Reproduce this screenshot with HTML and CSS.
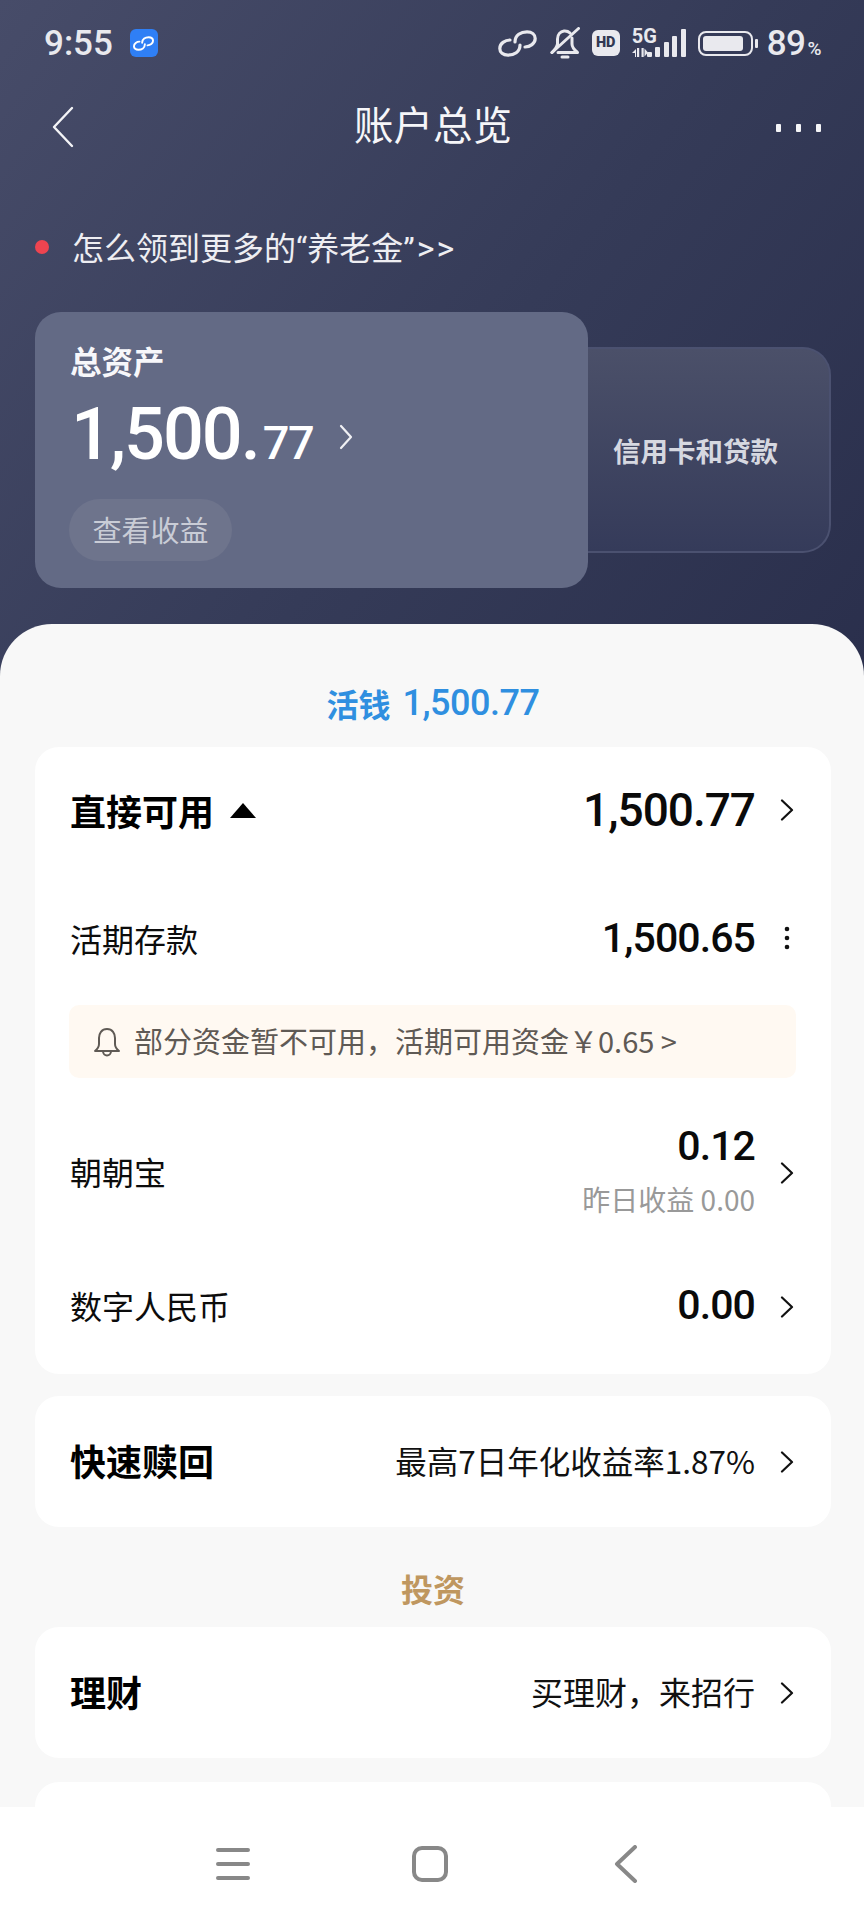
FILE: index.html
```html
<!DOCTYPE html>
<html lang="zh-CN">
<head>
<meta charset="utf-8">
<title>账户总览</title>
<link rel="stylesheet" href="styles.css">
</head>
<body>
<div class="page">
  <header class="hero">
    <div class="status">
      <div class="status-left">
        <span class="time">9:55</span>
        <span class="app-icon">
          <svg width="21" height="15" viewBox="0 0 39 27" fill="none" stroke="#fff" stroke-width="3.600" stroke-linecap="round"><path d="M17 12C17 5 23 1.800 29 1.800C34 1.800 37.200 4.500 37.200 8.500C37.200 13.500 32 17 27 17"/><path d="M22 15C22 22 16 25.200 10 25.200C5 25.200 1.800 22.500 1.800 18.500C1.800 13.500 7 10 12 10"/></svg>
        </span>
      </div>
      <div class="status-right">
        <svg class="ic-link" width="39" height="27" viewBox="0 0 39 27" fill="none" stroke="#e9e9ee" stroke-width="3.200" stroke-linecap="round"><path d="M17 12C17 5 23 1.800 29 1.800C34 1.800 37.200 4.500 37.200 8.500C37.200 13.500 32 17 27 17"/><path d="M22 15C22 22 16 25.200 10 25.200C5 25.200 1.800 22.500 1.800 18.500C1.800 13.500 7 10 12 10"/></svg>
        <svg class="ic-bell" width="30" height="32" viewBox="0 0 30 32" fill="none" stroke="#e9e9ee" stroke-width="3" stroke-linecap="round" stroke-linejoin="round"><path d="M7.500 17V12C7.500 7.500 10.500 4.500 14 4C16.500 3.800 18.500 4.500 20 6"/><path d="M22 11V17C22 20.500 24.500 23 27.500 25.500H8"/><path d="M7.500 17C7 20.500 4.500 23 2 25.500"/><path d="M28.500 1.500L2 25.500"/><path d="M12 30H18"/></svg>
        <span class="hd">HD</span>
        <div class="net">
          <div class="net-labels">
            <span class="g5">5G</span>
            <svg width="18" height="9" viewBox="0 0 18 9" fill="#e9e9ee"><path d="M0 5L4 1V9H3V5Z"/><rect x="5" y="0" width="2.200" height="9"/><rect x="9.500" y="0" width="2.200" height="9"/><path d="M16 4.500L12.500 8.500V.5Z"/></svg>
          </div>
          <div class="bars"><i class="b1"></i><i class="b2"></i><i class="b3"></i><i class="b4"></i><i class="b5"></i></div>
        </div>
        <div class="battery"><div class="battery-body"><div class="battery-fill"></div></div><div class="battery-nub"></div></div>
        <span class="pct">89<small>%</small></span>
      </div>
    </div>

    <nav class="titlebar">
      <div class="bar-side">
        <svg class="back" width="22" height="42" viewBox="0 0 22 42" fill="none" stroke="#f4f4f7" stroke-width="2.400" stroke-linecap="round" stroke-linejoin="round"><path d="M20 2L2 21L20 40"/></svg>
      </div>
      <h1 class="title">账户总览</h1>
      <div class="bar-side end"><div class="more"><i></i><i></i><i></i></div></div>
    </nav>

    <div class="notice"><span class="red-dot"></span><span>怎么领到更多的<span class="latin">“</span>养老金<span class="latin">”</span><span class="latin arrows">&gt;&gt;</span></span></div>

    <div class="assets">
      <section class="asset-card">
        <div class="asset-label">总资产</div>
        <div class="asset-value">
          <span class="big">1,500.</span><span class="small">77</span>
          <svg class="asset-chev" width="14" height="26" viewBox="0 0 14 26" fill="none" stroke="#f0f0f4" stroke-width="2.200" stroke-linecap="round" stroke-linejoin="round"><path d="M2 2L12 13L2 24"/></svg>
        </div>
        <span class="pill">查看收益</span>
      </section>
      <section class="side-card">信用卡和贷款</section>
    </div>
  </header>

  <main class="sheet">
    <div class="section-title blue"><span>活钱</span><span class="num">1,500.77</span></div>

    <section class="card">
      <div class="row row-head">
        <div class="head-label"><span class="strong">直接可用</span><svg width="26" height="15" viewBox="0 0 26 15"><path d="M13 0L26 15H0Z" fill="#000"/></svg></div>
        <div class="right"><span class="amount">1,500.77</span>
          <svg class="chev" width="14" height="22" viewBox="0 0 14 22" fill="none" stroke="#111" stroke-width="2.200" stroke-linecap="round" stroke-linejoin="round"><path d="M2 1.500L12 11L2 20.500"/></svg></div>
      </div>
      <div class="row row-deposit">
        <span class="label">活期存款</span>
        <div class="right"><span class="amount sm">1,500.65</span>
          <svg class="chev" width="14" height="24" viewBox="0 0 14 24" fill="#111"><circle cx="7" cy="3" r="2.300"/><circle cx="7" cy="12" r="2.300"/><circle cx="7" cy="21" r="2.300"/></svg></div>
      </div>
      <div class="alert">
        <svg width="28" height="30" viewBox="0 0 28 30" fill="none" stroke="#5f5a55" stroke-width="2" stroke-linecap="round" stroke-linejoin="round"><path d="M14 2C8.500 2 6 6.500 6 11V17C6 20 4.500 22 2 24H26C23.500 22 22 20 22 17V11C22 6.500 19.500 2 14 2Z"/><path d="M10 24C10 27 12 28.500 14 28.500C16 28.500 18 27 18 24"/></svg>
        <span class="alert-text">部分资金暂不可用，活期可用资金￥0.65 &gt;</span>
      </div>
      <div class="row row-zhao">
        <span class="label">朝朝宝</span>
        <div class="right">
          <div class="stack"><span class="amount sm">0.12</span><span class="sub">昨日收益 0.00</span></div>
          <svg class="chev" width="14" height="22" viewBox="0 0 14 22" fill="none" stroke="#111" stroke-width="2.200" stroke-linecap="round" stroke-linejoin="round"><path d="M2 1.500L12 11L2 20.500"/></svg>
        </div>
      </div>
      <div class="row row-digital">
        <span class="label">数字人民币</span>
        <div class="right"><span class="amount sm">0.00</span>
          <svg class="chev" width="14" height="22" viewBox="0 0 14 22" fill="none" stroke="#111" stroke-width="2.200" stroke-linecap="round" stroke-linejoin="round"><path d="M2 1.500L12 11L2 20.500"/></svg></div>
      </div>
    </section>

    <section class="card single gap">
      <span class="strong">快速赎回</span>
      <div class="right"><span class="desc small-desc">最高7日年化收益率1.87%</span>
        <svg class="chev" width="14" height="22" viewBox="0 0 14 22" fill="none" stroke="#111" stroke-width="2.200" stroke-linecap="round" stroke-linejoin="round"><path d="M2 1.500L12 11L2 20.500"/></svg></div>
    </section>

    <div class="section-title gold">投资</div>

    <section class="card single">
      <span class="strong">理财</span>
      <div class="right"><span class="desc">买理财，来招行</span>
        <svg class="chev" width="14" height="22" viewBox="0 0 14 22" fill="none" stroke="#111" stroke-width="2.200" stroke-linecap="round" stroke-linejoin="round"><path d="M2 1.500L12 11L2 20.500"/></svg></div>
    </section>

    <section class="card single next"></section>
  </main>

  <footer class="nav">
    <svg width="36" height="34" viewBox="0 0 36 34" fill="none" stroke="#888" stroke-width="4" stroke-linecap="round"><path d="M3 3H33M3 17H33M3 31H33"/></svg>
    <svg width="36" height="36" viewBox="0 0 36 36" fill="none" stroke="#888" stroke-width="4"><rect x="2" y="2" width="32" height="32" rx="8"/></svg>
    <svg class="nav-back" width="24" height="38" viewBox="0 0 24 38" fill="none" stroke="#888" stroke-width="4" stroke-linecap="round" stroke-linejoin="round"><path d="M21 2L3 19L21 36"/></svg>
  </footer>
</div>
</body>
</html>
```

FILE: styles.css
```css
* { box-sizing: border-box; }
html, body { margin: 0; padding: 0; }
body {
  font-family: "Noto Sans CJK SC", "Noto Sans", sans-serif;
  color: #000;
  background: #fff;
}
svg { display: block; flex: none; }
.page {
  width: 864px;
  height: 1920px;
  overflow: hidden;
  display: flex;
  flex-direction: column;
  background-color: #2a2f4c;
  background-image: linear-gradient(128deg, #474c69 0%, #353b58 55%, #2a2f4c 100%);
  background-size: 100% 680px;
  background-repeat: no-repeat;
}

/* Hero */
.hero { height: 624px; flex: none; padding: 0 33px 0 35px; color: #fff; }
.status {
  height: 86px;
  display: flex;
  justify-content: space-between;
  align-items: center;
  padding: 0 10px 0 9px;
}
.status-left { display: flex; align-items: center; gap: 17px; }
.time { font: 500 35px/1 Roboto, sans-serif; color: #e9e9ee; }
.app-icon {
  width: 28px; height: 28px;
  border-radius: 6px;
  background: #2f7ff5;
  display: flex; align-items: center; justify-content: center;
}
.status-right { display: flex; align-items: center; }
.ic-link { margin-right: 13px; }
.ic-bell { margin-right: 12px; }
.hd {
  width: 28px; height: 26px;
  border-radius: 6px;
  background: #e9e9ee;
  color: #323853;
  font: 900 14.500px/26px Roboto, sans-serif;
  text-align: center;
  margin-right: 12px;
}
.net { display: grid; width: 54px; height: 28px; margin-right: 12px; }
.net-labels, .bars { grid-area: 1 / 1; }
.net-labels { display: flex; flex-direction: column; justify-content: space-between; align-items: flex-start; }
.g5 { font: 700 20px/14px Roboto, sans-serif; color: #e9e9ee; }
.bars { display: flex; align-items: flex-end; justify-content: flex-end; gap: 3.500px; }
.bars i { display: block; width: 5px; background: #e9e9ee; border-radius: 1px; }
.b1 { height: 5px; }
.b2 { height: 10px; }
.b3 { height: 15px; }
.b4 { height: 21px; }
.b5 { height: 28px; }
.battery { display: flex; align-items: center; gap: 2px; margin-right: 9px; }
.battery-body {
  width: 55px; height: 25px;
  border: 2.500px solid #e9e9ee;
  border-radius: 8px;
  padding: 3px;
}
.battery-fill { height: 100%; width: 90%; background: #e9e9ee; border-radius: 3px; }
.battery-nub { width: 3px; height: 9px; background: #e9e9ee; border-radius: 1px; }
.pct { font: 500 35px/1 Roboto, sans-serif; color: #e9e9ee; letter-spacing: -.5px; }
.pct small { font-size: 19px; margin-left: 2px; }

.titlebar {
  height: 82px;
  display: flex;
  align-items: center;
  justify-content: space-between;
  padding: 0 10px 0 17px;
}
.bar-side { flex: 1; display: flex; }
.bar-side.end { justify-content: flex-end; }
.title {
  margin: 0 7px 9px 0;
  font-size: 39.500px;
  font-weight: 400;
  line-height: 1;
  color: #f6f6f9;
}
.more { display: flex; gap: 15px; margin-top: 2px; }
.more i { display: block; width: 5px; height: 8px; background: #f4f4f7; border-radius: 1px; }

.notice {
  margin-top: 59px;
  height: 40px;
  display: flex;
  align-items: center;
  gap: 23px;
  font-size: 32px;
  line-height: 40px;
  color: #eeeef2;
}
.red-dot { width: 14px; height: 14px; border-radius: 50%; background: #ee4450; flex: none; }
.latin { font-family: Roboto, sans-serif; }
.arrows { letter-spacing: 2px; margin-left: 2px; font-size: 34px; }

.assets { margin-top: 45px; display: flex; align-items: center; }
.asset-card {
  position: relative;
  z-index: 1;
  width: 553px;
  height: 276px;
  border-radius: 26px;
  background: #636a85;
  padding: 27px 36px 0;
  flex: none;
}
.asset-label { font-size: 31.500px; font-weight: 700; line-height: 42px; color: #f7f7fa; margin-left: -1px; }
.asset-value {
  margin-top: 12px;
  height: 84px;
  display: flex;
  align-items: baseline;
  color: #fff;
  font-family: Roboto, sans-serif;
  font-weight: 500;
}
.big { font-size: 72px; line-height: 84px; letter-spacing: -2px; }
.small { font-size: 47px; line-height: 84px; letter-spacing: -1.500px; margin-left: 4px; }
.asset-chev { align-self: center; margin-left: 26px; margin-top: 4px; }
.pill {
  display: inline-block;
  margin-top: 22px;
  margin-left: -2px;
  height: 62px;
  padding: 0 23.500px;
  border-radius: 31px;
  background: #6e748c;
  color: #c9ccd6;
  font-size: 29px;
  line-height: 60px;
}
.side-card {
  flex: 1;
  height: 206px;
  margin-left: -30px;
  padding-left: 4px;
  border: 2px solid #4b5170;
  border-left: 0;
  border-radius: 0 28px 28px 0;
  background: linear-gradient(180deg, #4b5069 0%, #353b5a 100%);
  color: #d6d8e0;
  font-size: 27.500px;
  font-weight: 700;
  display: flex;
  align-items: center;
  justify-content: center;
}

/* Sheet */
.sheet {
  flex: 1;
  min-height: 0;
  overflow: hidden;
  background: #f8f8f8;
  border-radius: 52px 52px 0 0;
  padding: 0 33px 0 35px;
}
.section-title {
  display: flex;
  justify-content: center;
  align-items: center;
  gap: 12px;
  font-size: 32px;
  font-weight: 700;
  line-height: 44px;
}
.blue { color: #2f8fe0; height: 123px; padding-top: 35px; }
.gold { color: #bf9760; height: 100px; padding-top: 22px; }
.num { font-family: Roboto, sans-serif; font-size: 36px; font-weight: 500; letter-spacing: -.5px; }

.card { background: #fff; border-radius: 24px; }
.row { display: flex; align-items: center; justify-content: space-between; padding: 0 37px 0 35px; }
.row-head { height: 127px; padding-bottom: 1px; }
.row-deposit { height: 131px; padding-bottom: 3px; }
.row-zhao { height: 163px; padding-top: 22px; }
.row-zhao .chev { margin-top: 4px; }
.row-digital { height: 133px; padding-bottom: 6px; }
.row-digital .chev { margin-top: 5px; }
.head-label { display: flex; align-items: center; gap: 16px; }
.strong { font-size: 36px; font-weight: 700; line-height: 48px; }
.label { font-size: 32px; line-height: 44px; color: #0c0c0c; }
.right { display: flex; align-items: center; gap: 25px; }
.amount { font: 500 46px/52px Roboto, sans-serif; letter-spacing: -1px; color: #0a0a0a; }
.amount.sm { font-size: 41px; line-height: 46px; letter-spacing: -.9px; }
.stack { display: flex; flex-direction: column; align-items: flex-end; }
.sub { margin-top: 10px; font-size: 28px; line-height: 40px; color: #999; }
.alert {
  margin: 0 35px 0 34px;
  height: 73px;
  background: #fff9f2;
  border-radius: 10px;
  padding: 0 24px;
  display: flex;
  align-items: center;
  gap: 13px;
  color: #5f5a55;
  font-size: 29px;
}
.alert-text { margin-bottom: 4px; }
.single {
  height: 131px;
  display: flex;
  align-items: center;
  justify-content: space-between;
  padding: 0 37px 0 35px;
}
.single .strong { margin-bottom: 4px; }
.gap { margin-top: 22px; }
.desc { font-size: 32px; color: #111; margin-bottom: 4px; }
.small-desc { font-size: 31.500px; }
.next { margin-top: 24px; }

/* Nav */
.nav {
  flex: none;
  height: 113px;
  background: #fff;
  display: flex;
  align-items: center;
  gap: 161px;
  padding: 0 0 0 215px;
}
.nav-back { margin-left: 5px; }
```
